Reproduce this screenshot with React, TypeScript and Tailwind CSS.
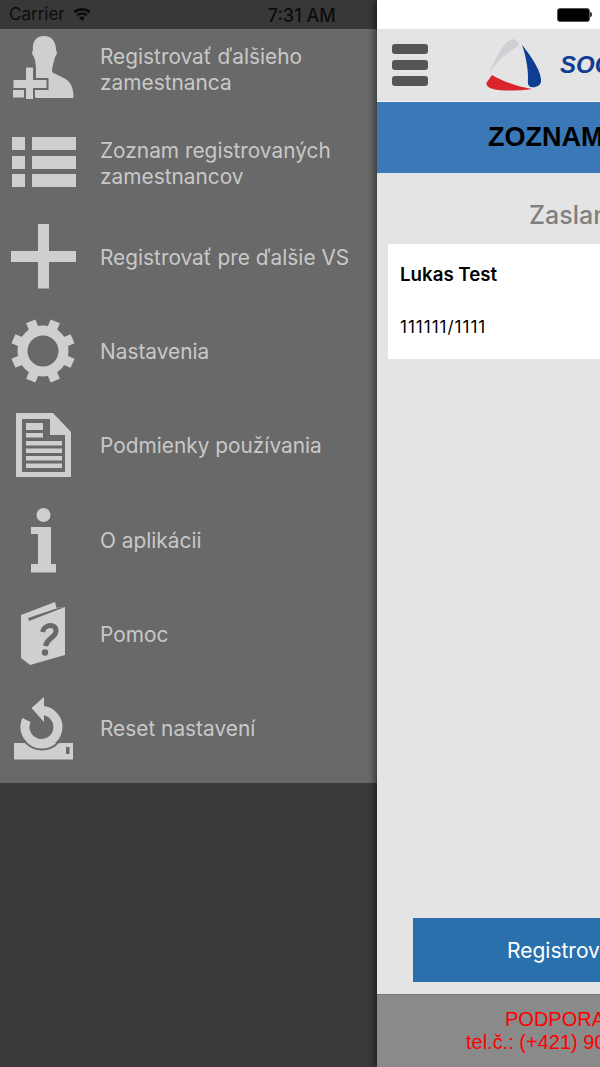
import type { ReactNode } from "react";

const LIGHT = "#cfcfcf";
const DIM = "#696969";

// icons are drawn in page coordinates, the viewBox is the 64px box of the row
function Icon({ cy, children }: { cy: number; children: ReactNode }) {
  return (
    <svg
      width="64"
      height="64"
      viewBox={`12 ${cy - 32} 64 64`}
      className="shrink-0 overflow-visible"
      fill={LIGHT}
    >
      {children}
    </svg>
  );
}

const PersonIcon = () => (
  <Icon cy={69}>
    <path d="M44 36C52 36 56 42 56 50C57.500 52 57 55 55 57C54 62 52 66 52 72C58 76 68 78 71 85C73 89 73.500 93 73.500 98H36V75C36 68 36 62 34 57C32 55 31.500 52 33 50C32 42 36 36 44 36Z" />
    <rect x="13" y="90" width="24" height="7.500" />
    <path
      d="M25 66.500H34V79H47.500V89H34V100H25V89H12.500V79H25Z"
      stroke={DIM}
      strokeWidth="2"
    />
  </Icon>
);

const ListIcon = () => (
  <Icon cy={163}>
    <rect x="12" y="137" width="13" height="13" />
    <rect x="12" y="156" width="13" height="13" />
    <rect x="12" y="174" width="13" height="13" />
    <rect x="32" y="137" width="44" height="13" />
    <rect x="32" y="156" width="44" height="13" />
    <rect x="32" y="174" width="44" height="13" />
  </Icon>
);

const PlusIcon = () => (
  <Icon cy={257}>
    <rect x="38" y="224" width="11" height="64.500" />
    <rect x="11" y="251" width="65" height="11" />
  </Icon>
);

const GearIcon = () => (
  <Icon cy={351}>
    <circle cx="43" cy="351" r="20.500" fill="none" stroke={LIGHT} strokeWidth="10" />
    {[22.5, 67.5, 112.5, 157.5, 202.5, 247.5, 292.5, 337.5].map((a) => (
      <rect
        key={a}
        x="38"
        y="319"
        width="10"
        height="10"
        transform={`rotate(${a} 43 351)`}
      />
    ))}
  </Icon>
);

const DocIcon = () => (
  <Icon cy={445}>
    <path d="M16 413H53L71 432V477H16Z" />
    <path d="M22 419H50V435H65V472H22Z" fill={DIM} />
    <path d="M53 423L64 432H53Z" />
    <rect x="26" y="423" width="17" height="7" />
    <rect x="26" y="433" width="17" height="4.500" />
    <rect x="26" y="441" width="36" height="4.500" />
    <rect x="26" y="448.500" width="36" height="4.500" />
    <rect x="26" y="456" width="36" height="4.500" />
    <rect x="26" y="463.500" width="36" height="4.500" />
  </Icon>
);

const InfoIcon = () => (
  <Icon cy={539}>
    <circle cx="43.500" cy="514" r="7" />
    <path d="M31 526H51V563H56V571.500H31V563H38V533H31Z" />
  </Icon>
);

const BookIcon = () => (
  <Icon cy={634}>
    <path d="M21 615L55 602L56.500 608L65 607V655L30 665L21 658Z" />
    <path d="M28 618L58 608L65 607L29 621Z" fill={DIM} />
    <path
      d="M42.500 632C44 624 56.500 623 56 631C55.500 638 47 638 45.500 646"
      fill="none"
      stroke={DIM}
      strokeWidth="5"
    />
    <circle cx="45" cy="652.500" r="3.200" fill={DIM} />
  </Icon>
);

const ResetIcon = () => (
  <Icon cy={728}>
    <rect x="14" y="743" width="59" height="16.500" />
    <rect x="66" y="747" width="3.500" height="7" fill={DIM} />
    <circle cx="42" cy="727" r="22.500" fill="none" stroke={DIM} strokeWidth="2" />
    <path
      d="M42 710.500A16.500 16.500 0 1 1 26.500 720"
      fill="none"
      stroke={LIGHT}
      strokeWidth="9"
    />
    <path d="M44 697V722L31.500 708Z" />
  </Icon>
);

const items = [
  { icon: <PersonIcon />, label: ["Registrovať ďalšieho", "zamestnanca"] },
  { icon: <ListIcon />, label: ["Zoznam registrovaných", "zamestnancov"] },
  { icon: <PlusIcon />, label: ["Registrovať pre ďalšie VS"] },
  { icon: <GearIcon />, label: ["Nastavenia"] },
  { icon: <DocIcon />, label: ["Podmienky používania"] },
  { icon: <InfoIcon />, label: ["O aplikácii"] },
  { icon: <BookIcon />, label: ["Pomoc"] },
  { icon: <ResetIcon />, label: ["Reset nastavení"] },
];

export default function App() {
  return (
    <div className="flex h-[1067px] w-[600px] overflow-hidden bg-[#3a3a3a] font-['Inter',sans-serif]">
      {/* drawer */}
      <aside className="flex w-[377px] shrink-0 flex-col">
        <div className="relative z-10 flex h-[29px] shrink-0 items-center bg-[#383838] pt-px pl-[9px] text-[17px] text-[#0c0c0c]">
          <span>Carrier</span>
          <svg width="18" height="13" viewBox="0 0 18 13" className="mb-px ml-[8px]" fill="#0c0c0c">
            <path d="M9 13L6 9.500C7.800 8 10.200 8 12 9.500Z" />
            <path d="M5 8.300L3.300 6.300C6.600 3.500 11.400 3.500 14.700 6.300L13 8.300C10.700 6.300 7.300 6.300 5 8.300Z" />
            <path d="M2.300 5.200L0.500 3.100C5.300 -1 12.700 -1 17.500 3.100L15.700 5.200C11.800 1.900 6.200 1.900 2.300 5.200Z" />
          </svg>
          <span className="ml-[177px] text-[18px] font-medium">7:31 AM</span>
        </div>
        <div className="h-[754px] shrink-0 bg-[#696969]">
          <ul className="-mt-[7.5px]">
            {items.map((item) => (
              <li key={item.label[0]} className="flex h-[94.2px] items-center gap-6 pl-3">
                {item.icon}
                <span className="pt-[2px] text-[20.85px] leading-[26px] text-[#c8c8c8]">
                  {item.label.map((line) => (
                    <span key={line} className="block">
                      {line}
                    </span>
                  ))}
                </span>
              </li>
            ))}
          </ul>
        </div>
      </aside>

      {/* main screen, pushed off to the right by the drawer */}
      <main className="relative z-20 flex w-[600px] shrink-0 flex-col bg-[#e4e4e4] shadow-[-3px_0_6px_rgba(0,0,0,0.45)]">
        <div className="flex h-[29px] shrink-0 items-center bg-white pl-[180px]">
          <div className="h-[14px] w-[33px] rounded-[3px] border border-[#555] bg-black" />
          <div className="h-[5px] w-[2px] rounded-r-sm bg-[#333]" />
        </div>

        <header className="flex h-[73px] shrink-0 items-center border-b border-[#f4f4f4] bg-[#e4e4e4] pl-[15px]">
          <div className="flex w-[36px] flex-col gap-[6px]">
            <span className="h-[10px] rounded-[3px] bg-[#555]" />
            <span className="h-[10px] rounded-[3px] bg-[#555]" />
            <span className="h-[10px] rounded-[3px] bg-[#555]" />
          </div>
          <svg width="60" height="56" viewBox="484 36 60 56" className="ml-[56px]">
            <path
              d="M489 72C497 55 503 42 510 39C515 37 518 40 519 45C508 50 497 60 489 72Z"
              fill="#cfd0d3"
            />
            <path
              d="M522 44C532 56 542 72 541 80C541 85 535 87 531 86C527 85 528 80 528 76C528 65 525 52 522 44Z"
              fill="#0f3d91"
            />
            <path
              d="M492 74C502 80 518 86 532 88C518 90 500 90 493 88C488 87 485 83 487 81Z"
              fill="#d9262e"
            />
          </svg>
          <span className="ml-[16px] font-['Liberation_Sans',sans-serif] text-[24px] font-bold italic text-[#0f3d91]">
            SOC
          </span>
        </header>

        <div className="flex h-[71px] shrink-0 items-center bg-[#3a78b8] pl-[111px] font-['Liberation_Sans',sans-serif] text-[27px] font-bold text-black">
          ZOZNAM
        </div>

        <h2 className="mt-[27px] pl-[152px] text-[25px] leading-[30px] font-medium text-[#808080]">
          Zaslan
        </h2>

        <section className="mt-[14px] ml-[11px] h-[115px] w-[578px] bg-white pl-[12px] text-black">
          <p className="pt-[19px] text-[18.7px] leading-[24px] font-semibold">Lukas Test</p>
          <p className="pt-[29px] text-[17px] leading-[22px] tracking-[1px]">111111/1111</p>
        </section>

        <div className="mt-auto px-[36px] pb-[12px]">
          <button className="h-[64px] w-full bg-[#2a70ad] pt-px pl-[94px] text-left text-[21px] text-white">
            Registrov
          </button>
        </div>

        <footer className="h-[73px] shrink-0 border-t border-[#7a7a7a] bg-[#8a8a8a] pt-[13px] font-['Liberation_Sans',sans-serif] text-[20px] leading-[23px] text-[#ff0000]">
          <p className="pl-[128px]">PODPORA</p>
          <p className="pl-[89px]">tel.č.: (+421) 90</p>
        </footer>
      </main>
    </div>
  );
}
